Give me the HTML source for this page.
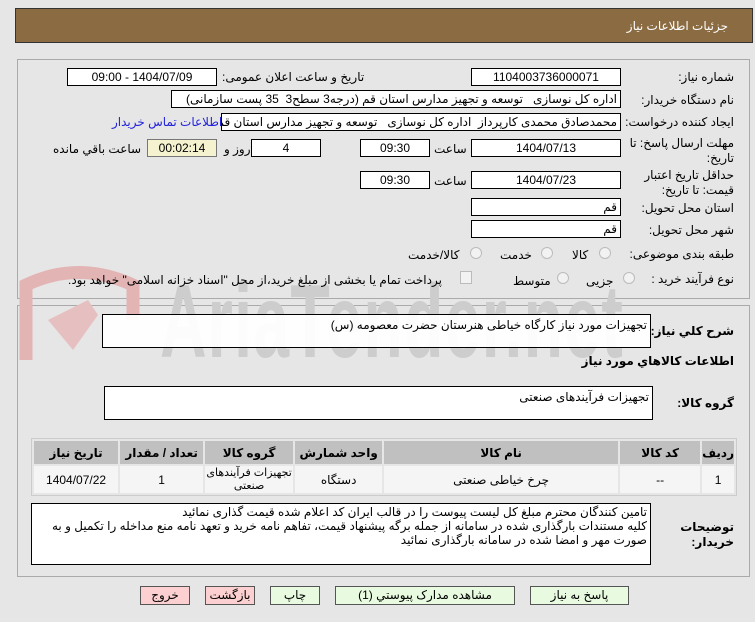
<!DOCTYPE html>
<html><head><meta charset="utf-8"><style>
*{box-sizing:border-box;margin:0;padding:0}
body{width:755px;height:622px;background:#e6e6e6;font-family:"Liberation Sans","DejaVu Sans",sans-serif;font-size:12px;color:#000;position:relative;overflow:hidden;direction:rtl}
.a{position:absolute;white-space:nowrap}
.hd{left:15px;top:8px;width:738px;height:35px;background:#8b6b42;border:1px solid #333}
.hd span{position:absolute;right:24px;top:10px;color:#fff;font-size:12px}
.pn{border:1px solid #aaa}
.b{position:absolute;background:#fff;border:1px solid #000;height:18px;line-height:16px;font-size:12px;text-align:center;white-space:nowrap;overflow:hidden}
.l{position:absolute;font-size:12px;white-space:nowrap}
.r{text-align:right;padding-right:3px}
.rad{position:absolute;width:12px;height:12px;border:1px solid #bbb;border-radius:50%;background:#f2f2f2}
table{position:absolute;left:31px;top:438px;width:706px;border-collapse:separate;border-spacing:2px;border:1px solid #ccc;background:#e6e6e6}
th{background:#c0c0c0;height:23px;font-size:12px;font-weight:bold}
td{background:#f5f5f5;height:27px;text-align:center;font-size:12px}
.btn{position:absolute;top:586px;height:19px;border:1px solid #555;background:#e8fbe0;text-align:center;font-size:12px;line-height:17px}
.pk{background:#fcd0d0}
</style></head><body>
<div class="a hd"><span>جزئیات اطلاعات نیاز</span></div>
<div class="a pn" style="left:17px;top:59px;width:733px;height:240px"></div>
<div class="a pn" style="left:17px;top:305px;width:733px;height:272px"></div>
<svg class="a" style="left:18px;top:260px" width="130" height="120" viewBox="0 0 130 120"><path d="M8 100 L8 25 Q60 0 115 25 L115 60" stroke="#e3b4b4" stroke-width="13" fill="none"/><path d="M30 60 L70 40 L80 55 L55 90 Z" fill="#e6c0c0"/></svg>
<div class="a" style="left:160px;top:262px;font-size:104px;font-weight:bold;color:#cdcdcd;direction:ltr;letter-spacing:2px;transform:scaleX(0.62);transform-origin:left top;line-height:120px">AriaTender.net</div>

<div class="l" style="right:21px;top:70px">شماره نیاز:</div>
<div class="b" style="left:471px;top:68px;width:150px">1104003736000071</div>
<div class="l" style="left:222px;top:70px">تاریخ و ساعت اعلان عمومی:</div>
<div class="b" style="left:67px;top:68px;width:150px">1404/07/09 - 09:00</div>

<div class="l" style="right:21px;top:93px">نام دستگاه خریدار:</div>
<div class="b r" style="left:171px;top:90px;width:450px">اداره کل نوسازی &nbsp; توسعه و تجهیز مدارس استان قم (درجه3 سطح3 &nbsp;35 پست سازمانی)</div>

<div class="l" style="right:21px;top:115px">ایجاد کننده درخواست:</div>
<div class="b r" style="left:221px;top:113px;width:400px">محمدصادق محمدی کارپرداز &nbsp;اداره کل نوسازی &nbsp; توسعه و تجهیز مدارس استان قم</div>
<div class="l" style="left:112px;top:115px;color:#2222dd">اطلاعات تماس خریدار</div>

<div class="l" style="right:21px;top:136px;line-height:15px;text-align:right">مهلت ارسال پاسخ: تا<br>تاریخ:</div>
<div class="b" style="left:471px;top:139px;width:150px">1404/07/13</div>
<div class="l" style="left:434px;top:142px">ساعت</div>
<div class="b" style="left:360px;top:139px;width:70px">09:30</div>
<div class="b" style="left:251px;top:139px;width:70px">4</div>
<div class="l" style="left:224px;top:142px">روز و</div>
<div class="b" style="left:147px;top:139px;width:70px;background:#f5f2d0;border-color:#777">00:02:14</div>
<div class="l" style="left:53px;top:142px">ساعت باقي مانده</div>

<div class="l" style="right:21px;top:168px;line-height:15px;text-align:right">حداقل تاریخ اعتبار<br>قیمت: تا تاریخ:</div>
<div class="b" style="left:471px;top:171px;width:150px">1404/07/23</div>
<div class="l" style="left:434px;top:174px">ساعت</div>
<div class="b" style="left:360px;top:171px;width:70px">09:30</div>

<div class="l" style="right:21px;top:201px">استان محل تحویل:</div>
<div class="b r" style="left:471px;top:198px;width:150px">قم</div>
<div class="l" style="right:21px;top:223px">شهر محل تحویل:</div>
<div class="b r" style="left:471px;top:220px;width:150px">قم</div>

<div class="l" style="right:21px;top:247px">طبقه بندی موضوعی:</div>
<div class="rad" style="left:599px;top:247px"></div><div class="l" style="left:572px;top:248px">کالا</div>
<div class="rad" style="left:541px;top:247px"></div><div class="l" style="left:500px;top:248px">خدمت</div>
<div class="rad" style="left:470px;top:247px"></div><div class="l" style="left:408px;top:248px">کالا/خدمت</div>

<div class="l" style="right:21px;top:272px">نوع فرآیند خرید :</div>
<div class="rad" style="left:623px;top:272px"></div><div class="l" style="left:586px;top:274px">جزیی</div>
<div class="rad" style="left:557px;top:272px"></div><div class="l" style="left:513px;top:274px">متوسط</div>
<div class="a" style="left:460px;top:271px;width:12px;height:13px;border:1px solid #bbb;background:#f2f2f2"></div>
<div class="l" style="left:68px;top:273px">پرداخت تمام یا بخشی از مبلغ خرید،از محل "اسناد خزانه اسلامی" خواهد بود.</div>

<div class="l" style="right:21px;top:324px;font-weight:bold">شرح كلي نياز:</div>
<div class="b r" style="left:102px;top:314px;width:549px;height:34px;text-align:right;padding-top:2px;background:rgba(255,255,255,0.93)">تجهیزات مورد نیاز کارگاه خیاطی هنرستان حضرت معصومه (س)</div>
<div class="l" style="right:21px;top:354px;font-weight:bold">اطلاعات كالاهاي مورد نياز</div>
<div class="l" style="right:21px;top:396px;font-weight:bold">گروه کالا:</div>
<div class="b r" style="left:104px;top:386px;width:549px;height:34px;text-align:right;padding-top:2px">تجهیزات فرآیندهای صنعتی</div>

<table>
<tr><th style="width:27px">ردیف</th><th style="width:80px">کد کالا</th><th style="width:234px">نام کالا</th><th style="width:87px">واحد شمارش</th><th style="width:88px">گروه کالا</th><th style="width:83px">تعداد / مقدار</th><th>تاریخ نیاز</th></tr>
<tr><td>1</td><td>--</td><td>چرخ خیاطی صنعتی</td><td>دستگاه</td><td style="line-height:13px;font-size:11px;white-space:nowrap">تجهیزات فرآیندهای<br>صنعتی</td><td>1</td><td>1404/07/22</td></tr>
</table>

<div class="l" style="right:21px;top:520px;font-weight:bold;line-height:15px;text-align:right">توضیحات<br>خریدار:</div>
<div class="b" style="left:31px;top:503px;width:620px;height:62px;text-align:right;white-space:normal;line-height:14px;padding:1px 3px">تامین کنندگان محترم مبلغ کل لیست پیوست را در قالب ایران کد اعلام شده قیمت گذاری نمائید<br>کلیه مستندات بارگذاری شده در سامانه از جمله برگه پیشنهاد قیمت، تفاهم نامه خرید و تعهد نامه منع مداخله را تکمیل و به صورت مهر و امضا شده در سامانه بارگذاری نمائید</div>

<div class="btn" style="left:530px;width:99px">پاسخ به نیاز</div>
<div class="btn" style="left:335px;width:180px">مشاهده مدارک پیوستي (1)</div>
<div class="btn" style="left:270px;width:50px">چاپ</div>
<div class="btn pk" style="left:205px;width:50px">بازگشت</div>
<div class="btn pk" style="left:140px;width:50px">خروج</div>
</body></html>
